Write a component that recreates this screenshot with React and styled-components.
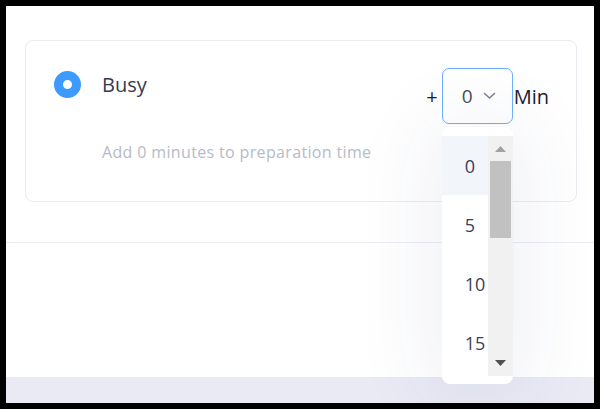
import React from 'react'
import styled, { createGlobalStyle } from 'styled-components'

const GlobalStyle = createGlobalStyle`
  html, body {
    margin: 0;
    padding: 0;
    background: #000;
  }
  body {
    font-family: "Open Sans", "Noto Sans", sans-serif;
  }
`

// only the rows that fit in the open list
const OPTIONS = [0, 5, 10, 15]

const Frame = styled.div`
  margin: 6px;
  width: 588px;
  height: 397px;
  background: #fff;
  display: flex;
  flex-direction: column;
  overflow: hidden;
`

const Card = styled.div`
  box-sizing: border-box;
  height: 162px;
  margin: 34px 17px 0 19px;
  padding: 0 27px 0 28px;
  border: 1px solid #ebebf1;
  border-radius: 8px;
  display: flex;
  justify-content: space-between;
  align-items: flex-start;
`

const Left = styled.div`
  padding-top: 30px;
`

const TitleRow = styled.div`
  display: flex;
  align-items: center;
  gap: 21px;
`

const Radio = styled.span`
  box-sizing: border-box;
  width: 27px;
  height: 27px;
  border-radius: 50%;
  border: 9px solid #3d9bff;
  background: #fff;
`

const Title = styled.span`
  font-size: 20px;
  line-height: 27px;
  color: #353a4f;
`

const Hint = styled.div`
  margin: 43px 0 0 48px;
  font-size: 16px;
  line-height: 22px;
  letter-spacing: 0.35px;
  color: #b7bac9;
`

const Controls = styled.div`
  padding-top: 27px;
  display: flex;
  align-items: center;
  font-size: 20px;
  color: #1d2131;
`

const Plus = styled.span`
  margin-right: 4px;
`

const Unit = styled.span`
  margin-left: 1px;
`

const SelectWrap = styled.div`
  position: relative;
`

const SelectBox = styled.div`
  box-sizing: border-box;
  width: 71px;
  height: 56px;
  border: 1px solid #6cb0ff;
  border-radius: 7px;
  display: flex;
  align-items: center;
  padding-left: 19px;
  gap: 10px;
  color: #4a4c5e;
  font-size: 19px;
`

const Dropdown = styled.div`
  position: absolute;
  top: calc(100% + 3px);
  left: 0;
  width: 71px;
  box-sizing: border-box;
  padding: 9px 0 8px;
  background: #fff;
  border-radius: 8px;
  box-shadow: 0 6px 80px 14px rgba(40, 50, 110, 0.07);
  display: flex;
  z-index: 2;
`

const List = styled.div`
  flex: 1;
  height: 240px;
  overflow: hidden;
`

const Option = styled.div`
  height: 59px;
  display: flex;
  align-items: center;
  padding-left: 23px;
  font-size: 18px;
  color: #3b3f55;
  background: ${p => (p.$active ? '#f2f5f9' : '#fff')};
`

const Track = styled.div`
  width: 25px;
  height: 240px;
  background: #f1f1f1;
  display: flex;
  flex-direction: column;
  align-items: center;
`

const Arrow = styled.div`
  box-sizing: border-box;
  width: 100%;
  height: ${p => (p.$fill ? 'auto' : '25px')};
  flex: ${p => (p.$fill ? 1 : 'none')};
  display: flex;
  justify-content: center;
  align-items: ${p => (p.$fill ? 'flex-end' : 'center')};
  padding-bottom: ${p => (p.$fill ? '10px' : '0')};
`

const Thumb = styled.div`
  width: 21px;
  height: 77px;
  background: #c1c1c1;
`

const Divider = styled.div`
  margin-top: 40px;
  height: 1px;
  background: #ebebf3;
`

const Spacer = styled.div`
  flex: 1;
`

const BottomBar = styled.div`
  height: 26px;
  background: #e9eaf4;
`

function Chevron() {
  return (
    <svg width="13" height="8" viewBox="0 0 13 8" fill="none">
      <path d="M1.5 1.5 L6.5 6 L11.5 1.5" stroke="#7b7f98" strokeWidth="1.6" strokeLinecap="round" strokeLinejoin="round" />
    </svg>
  )
}

function Triangle({ up, color }) {
  return (
    <svg width="11" height="6" viewBox="0 0 11 6">
      <path d={up ? 'M0 6 L5.5 0 L11 6 Z' : 'M0 0 L5.5 6 L11 0 Z'} fill={color} />
    </svg>
  )
}

export default function App() {
  const value = 0
  return (
    <>
      <GlobalStyle />
      <Frame>
        <Card>
          <Left>
            <TitleRow>
              <Radio />
              <Title>Busy</Title>
            </TitleRow>
            <Hint>Add {value} minutes to preparation time</Hint>
          </Left>
          <Controls>
            <Plus>+</Plus>
            <SelectWrap>
              <SelectBox>
                <span>{value}</span>
                <Chevron />
              </SelectBox>
              <Dropdown>
                <List>
                  {OPTIONS.map(o => (
                    <Option key={o} $active={o === value}>{o}</Option>
                  ))}
                </List>
                <Track>
                  <Arrow><Triangle up color="#a3a3a3" /></Arrow>
                  <Thumb />
                  <Arrow $fill><Triangle color="#505050" /></Arrow>
                </Track>
              </Dropdown>
            </SelectWrap>
            <Unit>Min</Unit>
          </Controls>
        </Card>
        <Divider />
        <Spacer />
        <BottomBar />
      </Frame>
    </>
  )
}
